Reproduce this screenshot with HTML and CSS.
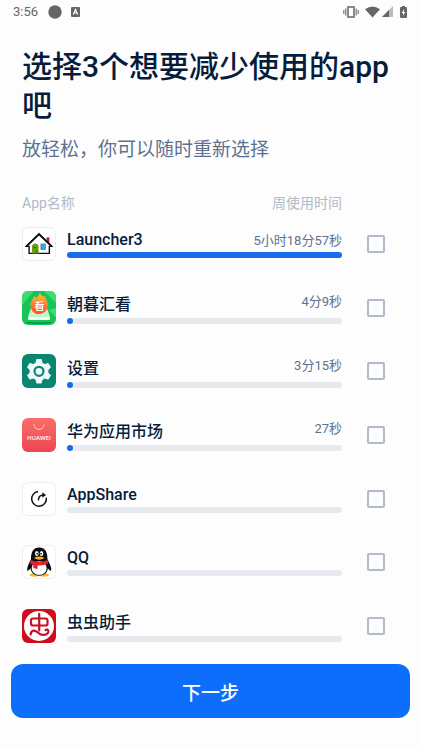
FILE: index.html
```html
<!DOCTYPE html>
<html lang="zh-CN">
<head>
    <meta charset="UTF-8">
    <meta name="viewport" content="width=device-width, initial-scale=1.0">
    <title>选择应用</title>

    <link rel="stylesheet" href="styles.css">
</head>
<body>

    <!-- Status bar -->
    <div class="status-bar">
        <span class="clock">3:56</span>
        <svg class="dot" width="14" height="14" viewBox="0 0 14 14"><circle cx="7" cy="7" r="6.7"/></svg>
        <svg width="9" height="10" viewBox="0 0 9 10">
            <rect width="9" height="10" rx="1"/>
            <path d="M2.3 7.5 4.5 2.5 6.7 7.5M3.2 6H5.8" fill="none" stroke="#fff" stroke-width="1.2"/>
        </svg>
        <div class="status-right">
            <svg width="16" height="12" viewBox="0 0 16 12">
                <path d="M5 1H11V11H5Z" fill="none" stroke="#666" stroke-width="1.5"/>
                <path d="M2.8 2.5V9.5M.8 4V8M13.2 2.5V9.5M15.2 4V8" stroke="#777" stroke-width="1.2"/>
            </svg>
            <svg class="wifi" width="15" height="12" viewBox="0 0 15 12"><path d="M0 3.2Q7.5-2.4 15 3.2L7.5 11.5Z"/></svg>
            <svg width="11" height="11" viewBox="0 0 11 11">
                <path d="M0 11 11 0V11Z" fill="#bbb"/>
                <path d="M0 11 7 4V11Z"/>
            </svg>
            <svg class="battery" width="7" height="12" viewBox="0 0 7 12">
                <path d="M2 0H5V1H6Q7 1 7 2V11Q7 12 6 12H1Q0 12 0 11V2Q0 1 1 1H2Z"/>
                <path d="M4.3 3 1.6 6.9H3.2L2.7 10 5.4 6H3.8Z" fill="#fff"/>
            </svg>
        </div>
    </div>

    <main class="page">
        <h1>选择3个想要减少使用的app吧</h1>
        <p class="subtitle">放轻松，你可以随时重新选择</p>

        <div class="list-head">
            <span>App名称</span>
            <span>周使用时间</span>
        </div>

        <ul class="app-list">
            <li class="app-item">
                <svg class="app-icon bordered" viewBox="0 0 34 34">
                    <rect x="25" y="10" width="3" height="6" fill="#c81c28"/>
                    <path d="M3.5 19.5 17 6.5 30.5 19.5H28V27H6.5V19.5Z" fill="#fff" stroke="#111" stroke-width="1.5"/>
                    <path d="M3.5 19.5 17 6.5 30.5 19.5" fill="none" stroke="#111" stroke-width="2"/>
                    <path d="M9.500 18.500Q13 14.500 16.500 18.500V27H9.500Z" fill="#6b9d16"/>
                    <path d="M11.5 21H14M14.5 24V26" stroke="#284607"/>
                    <rect x="19" y="17" width="5" height="6" fill="#28aee2" stroke="#64727a" stroke-width=".7"/>
                </svg>
                <div class="app-info">
                    <div class="app-text">
                        <label class="app-name" for="app1">Launcher3</label>
                        <span class="app-time">5小时18分57秒</span>
                    </div>
                    <div class="bar"><div class="bar-fill" style="width: 100%"></div></div>
                </div>
                <input type="checkbox" id="app1">
            </li>
            <li class="app-item">
                <svg class="app-icon" viewBox="0 0 34 34">
                    <defs>
                        <linearGradient id="flame" x1="0" y1="0" x2="0" y2="1">
                            <stop offset="0" stop-color="#ffc72d"/>
                            <stop offset=".6" stop-color="#fb7832"/>
                            <stop offset="1" stop-color="#f4552c"/>
                        </linearGradient>
                    </defs>
                    <rect width="34" height="34" fill="#16c45c"/>
                    <path d="M0 0H12L0 14ZM22 0H34V12ZM34 17V27L27 19Z" fill="#3bdc70"/>
                    <path d="M9 17H25L28 26H6Z" fill="#c5f5c7"/>
                    <path d="M6 26H28V29H6Z" fill="#ecfff0"/>
                    <path d="M5 31.5Q17 33 29 31.5" fill="none" stroke="#087b3e" stroke-width="1.2"/>
                    <path d="M9 17C7 11 11 9 12 5L15 7 18 2C19 5 22 6 23 5C23 8 26 10 26 14C26 19 22 23 17 23C13 23 10 21 9 17Z" fill="url(#flame)"/>
                    <path d="M13.5 11.5 21 10.5M13 13.5H22M17 11 13 17M15 15H20.5V19.5H15ZM15 17.2H20" fill="none" stroke="#fff" stroke-width="1.2"/>
                </svg>
                <div class="app-info">
                    <div class="app-text">
                        <label class="app-name" for="app2">朝暮汇看</label>
                        <span class="app-time">4分9秒</span>
                    </div>
                    <div class="bar"><div class="bar-fill" style="width: 1.3%"></div></div>
                </div>
                <input type="checkbox" id="app2">
            </li>
            <li class="app-item">
                <svg class="app-icon" viewBox="0 0 34 34">
                    <rect width="34" height="34" fill="#09866f"/>
                    <path d="M14.7 5.5H19.3L20 9 22.8 10.6 26.2 9.4 28.5 13.4 25.9 15.7V18.9L28.5 21.2 26.2 25.2 22.8 24 20 25.6 19.3 29H14.7L14 25.6 11.2 24 7.8 25.2 5.5 21.2 8.1 18.9V15.7L5.5 13.4 7.8 9.4 11.2 10.6 14 9Z" fill="#ecfaf9" stroke="#ecfaf9" stroke-linejoin="round"/>
                    <circle cx="17" cy="17.3" r="4.5" fill="#ecfaf9" stroke="#168376" stroke-width="2.2"/>
                </svg>
                <div class="app-info">
                    <div class="app-text">
                        <label class="app-name" for="app3">设置</label>
                        <span class="app-time">3分15秒</span>
                    </div>
                    <div class="bar"><div class="bar-fill" style="width: 1%"></div></div>
                </div>
                <input type="checkbox" id="app3">
            </li>
            <li class="app-item">
                <svg class="app-icon" viewBox="0 0 34 34">
                    <defs>
                        <linearGradient id="market" x1="0" y1="0" x2="0" y2="1">
                            <stop offset="0" stop-color="#fc6d68"/>
                            <stop offset="1" stop-color="#ec4653"/>
                        </linearGradient>
                    </defs>
                    <rect width="34" height="34" fill="url(#market)"/>
                    <path d="M12 6.5C12.5 13 21.5 13 22 6.5" fill="none" stroke="#ffd9d6" stroke-width="1"/>
                    <text class="icon-text" x="17" y="21.5" text-anchor="middle">HUAWEI</text>
                </svg>
                <div class="app-info">
                    <div class="app-text">
                        <label class="app-name" for="app4">华为应用市场</label>
                        <span class="app-time">27秒</span>
                    </div>
                    <div class="bar"><div class="bar-fill" style="width: 0.2%"></div></div>
                </div>
                <input type="checkbox" id="app4">
            </li>
            <li class="app-item">
                <svg class="app-icon bordered" viewBox="0 0 34 34">
                    <path d="M16 9.1A7.8 7.8 0 1 0 24.7 15.5" fill="none" stroke="#111" stroke-width="1.6"/>
                    <path d="M16.5 18.5C16 15 18 12.8 22 12.8" fill="none" stroke="#111" stroke-width="1.6"/>
                    <path d="M20.500 9.800 24.500 12.800 20.500 15.600Z" fill="#111"/>
                </svg>
                <div class="app-info">
                    <div class="app-text">
                        <label class="app-name" for="app5">AppShare</label>
                    </div>
                    <div class="bar"></div>
                </div>
                <input type="checkbox" id="app5">
            </li>
            <li class="app-item">
                <svg class="app-icon bordered" viewBox="0 0 34 34">
                    <ellipse cx="12" cy="30.8" rx="5" ry="1.8" fill="#f5b82c"/>
                    <ellipse cx="22.5" cy="30.8" rx="5" ry="1.8" fill="#f5b82c"/>
                    <path d="M8.5 14C8.5 6 11 1.500 17.200 1.500S26 6 26 14C28 18 30.500 22 30 26C29 27 27 25 26.500 23.500C26 29 22 31.500 17.200 31.500S8.500 29 8 23.500C7.500 25 5.500 27 4.500 26C4 22 6.500 18 8.500 14Z" fill="#080b10"/>
                    <ellipse cx="17.2" cy="23.5" rx="8" ry="7.3" fill="#fff"/>
                    <ellipse cx="14.7" cy="8" rx="1.9" ry="2.7" fill="#fff"/>
                    <ellipse cx="19.7" cy="8" rx="1.9" ry="2.7" fill="#fff"/>
                    <circle cx="15.2" cy="8.2" r=".9" fill="#111"/>
                    <circle cx="19.2" cy="8.2" r=".9" fill="#111"/>
                    <path d="M11.5 12.7Q17.2 9.8 23 12.7Q17.2 16.3 11.5 12.7Z" fill="#f7b126"/>
                    <path d="M8.4 14.8Q17 18.8 26 14.8L27 18.2Q21.5 21.3 15.5 20.7V24.5L11 23.5V20Q8.7 19.5 7.3 18.2Z" fill="#e5212d"/>
                </svg>
                <div class="app-info">
                    <div class="app-text">
                        <label class="app-name" for="app6">QQ</label>
                    </div>
                    <div class="bar"></div>
                </div>
                <input type="checkbox" id="app6">
            </li>
            <li class="app-item">
                <svg class="app-icon" viewBox="0 0 34 34">
                    <rect width="34" height="34" fill="#d00b1c"/>
                    <circle cx="17" cy="17" r="15" fill="#fff"/>
                    <path d="M11 9.500H23.500Q25.500 9.500 25.500 11.500V14.500Q25.500 16.500 23.500 16.500H11Q9 16.500 9 14.500V11.500Q9 9.500 11 9.500ZM17.200 4.800V21.500M8.500 25.500C9.500 20 13.500 21 16.500 24C19.500 27 24 26 25.500 24.500C27.500 22.500 26 19.500 23.500 21" fill="none" stroke="#c9101f" stroke-width="2.2" stroke-linecap="round"/>
                </svg>
                <div class="app-info">
                    <div class="app-text">
                        <label class="app-name" for="app7">虫虫助手</label>
                    </div>
                    <div class="bar"></div>
                </div>
                <input type="checkbox" id="app7">
            </li>
        </ul>
    </main>

    <button type="button" class="next-button">下一步</button>

</body>
</html>
```
FILE: styles.css
```css
/* General Styles */
* {
    box-sizing: border-box;
}

body {
    display: flex;
    flex-direction: column;
    min-height: 100vh;
    margin: 0;
    font-family: Roboto, "Noto Sans CJK SC", sans-serif;
    background: #fdfdfd;
    color: #061c3a;
}

/* Status bar */
.status-bar {
    display: flex;
    align-items: center;
    height: 23px;
    padding: 0 14px 0 13px;
    font-size: 13px;
    color: #666;
    fill: #666;
}

.dot {
    margin: 0 9px 0 10px;
}

.status-right {
    display: flex;
    align-items: center;
    margin-left: auto;
}

.wifi {
    margin: 0 2px 0 6px;
}

.battery {
    margin-left: 7px;
}

/* Page content */
.page {
    display: flex;
    flex: 1;
    flex-direction: column;
    padding: 24px 22px 21px;
}

h1 {
    margin: 0;
    font-size: 30px;
    font-weight: 500;
    line-height: 39px;
}

.subtitle {
    margin: 11px 0 0;
    font-size: 19px;
    line-height: 28px;
    color: #5d7290;
}

.list-head {
    display: flex;
    justify-content: space-between;
    margin: 29px 57px 14px 0;
    font-size: 14px;
    line-height: 20px;
    color: #b1bac6;
}

/* App list */
.app-list {
    display: flex;
    flex: 1;
    flex-direction: column;
    justify-content: space-between;
    margin: 0;
    padding: 0 14px 0 0;
    list-style: none;
}

.app-item {
    display: flex;
    align-items: center;
}

.app-icon {
    flex: none;
    width: 34px;
    height: 34px;
    margin-right: 11px;
    border-radius: 6px;
}

.app-icon.bordered {
    border: 1px solid #eee;
    background: #fff;
}

.icon-text {
    font-family: "Open Sans", sans-serif;
    font-size: 6px;
    font-weight: 600;
    fill: #fff;
}

.app-info {
    flex: 1;
}

.app-text {
    display: flex;
    align-items: flex-start;
    justify-content: space-between;
    margin-bottom: 3px;
}

.app-name {
    font-size: 16px;
    font-weight: 500;
}

.app-time {
    font-size: 13px;
    color: #5d7290;
}

.bar {
    height: 6px;
    border-radius: 3px;
    background: #e6e9ee;
}

.bar-fill {
    min-width: 6px;
    height: 6px;
    border-radius: 3px;
    background: #176de9;
}

input[type="checkbox"] {
    appearance: none;
    width: 18px;
    height: 18px;
    margin: 0 0 0 25px;
    border: 2px solid #b1bac6;
    border-radius: 2px;
}

input[type="checkbox"]:checked {
    border-color: #0d6efb;
    background: #0d6efb;
}

/* Bottom button */
.next-button {
    height: 54px;
    margin: 0 11px 30px;
    border: none;
    border-radius: 12px;
    background: #0d6efb;
    color: #fff;
    font-family: inherit;
    font-size: 19px;
    font-weight: 500;
    cursor: pointer;
}
```
